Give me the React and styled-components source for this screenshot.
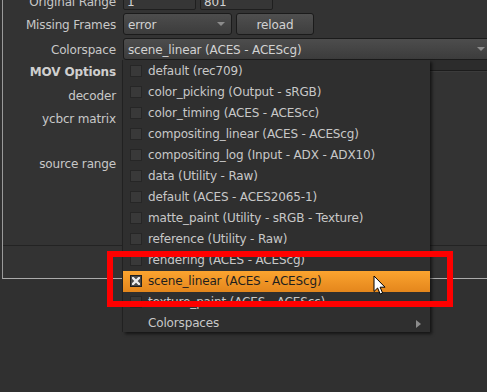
import React from "react";
import styled, { createGlobalStyle } from "styled-components";

const GlobalStyle = createGlobalStyle`
  html, body { margin: 0; padding: 0; background: #303030; overflow: hidden; }
  body {
    font-family: "DejaVu Sans", Verdana, sans-serif;
    font-size: 12px;
    letter-spacing: -0.15px;
    color: #c8c8c8;
  }
`;

const Page = styled.div`
  position: relative;
  width: 487px;
  height: 392px;
  overflow: hidden;
`;

const Panel = styled.div`
  margin: -11px 0 0 2px;
  width: 520px;
  height: 290px;
  box-sizing: border-box;
  border-left: 1px solid #9a9a9a;
  border-bottom: 1px solid #ababab;
  background: #333333;
  display: flex;
  flex-direction: column;
`;

const Row = styled.div`
  display: flex;
  align-items: flex-start;
  height: ${(p) => p.h}px;
  flex-shrink: 0;
`;

const Label = styled.div`
  width: 113px;
  flex-shrink: 0;
  text-align: right;
  white-space: nowrap;
  padding-top: ${(p) => p.pt}px;
  line-height: 18px;
  font-weight: ${(p) => (p.bold ? "bold" : "normal")};
  color: ${(p) => (p.bold ? "#cfcfcf" : "#c8c8c8")};
`;

const Controls = styled.div`
  display: flex;
  gap: 4px;
  margin-left: 7px;
  flex: 1;
`;

const Input = styled.div`
  width: 73px;
  height: 21px;
  box-sizing: border-box;
  border: 1px solid #1f1f1f;
  border-radius: 2px;
  background: #363636;
  padding: 4px 0 0 3px;
  line-height: 16px;
  color: #d2d2d2;
  overflow: hidden;
`;

const Dropdown = styled.div`
  display: flex;
  justify-content: space-between;
  align-items: flex-start;
  width: ${(p) => p.w}px;
  height: 22px;
  box-sizing: border-box;
  border: 1px solid #1b1b1b;
  border-radius: 3px;
  background: linear-gradient(#4d4d4d, #3c3c3c);
  padding: 2px 6px 0 4px;
  line-height: 18px;
  color: #d2d2d2;
  white-space: nowrap;
  flex-shrink: 0;
`;

const Arrow = styled.svg`
  margin-top: 6px;
  flex-shrink: 0;
`;

const Button = styled.div`
  width: 78px;
  height: 22px;
  box-sizing: border-box;
  border: 1px solid #1b1b1b;
  border-radius: 3px;
  background: linear-gradient(#4f4f4f, #3e3e3e);
  padding-top: 2px;
  line-height: 18px;
  text-align: center;
  color: #d2d2d2;
`;

const Band = styled.div`
  height: 10px;
  width: 100%;
  background: #2c2c2c;
  border-bottom: 1px solid #1c1c1c;
  box-shadow: 0 1px 0 #3b3b3b;
`;

const Footer = styled.div`
  margin-top: auto;
  height: 33px;
  box-sizing: border-box;
  border-top: 1px solid #232323;
`;

const Menu = styled.div`
  position: absolute;
  left: 123px;
  top: 60px;
  width: 307px;
  height: 272px;
  box-sizing: border-box;
  padding-top: 1px;
  background: #2f2f2f;
  box-shadow: 2px 2px 3px rgba(0, 0, 0, 0.6), -1px 0 0 #232323;
  overflow: hidden;
`;

const Item = styled.div`
  display: flex;
  align-items: center;
  gap: 6px;
  height: 21px;
  line-height: 21px;
  padding-left: 7px;
  white-space: nowrap;
  color: ${(p) => (p.active ? "#1e1e1e" : "#c8c8c8")};
  background: ${(p) =>
    p.active ? "linear-gradient(#fba42f, #e4861c)" : "transparent"};
`;

const Check = styled.div`
  width: 12px;
  height: 12px;
  box-sizing: border-box;
  flex-shrink: 0;
  margin-bottom: 2px;
  border: 1px solid ${(p) => (p.checked ? "#1e1e1e" : "#262626")};
  background: ${(p) => (p.checked ? "#4a4a4a" : p.hidden ? "transparent" : "#393939")};
  border-color: ${(p) => (p.hidden ? "transparent" : undefined)};
  display: flex;
  align-items: center;
  justify-content: center;
`;

const SubArrow = styled.svg`
  margin-left: auto;
  margin-right: 9px;
  flex-shrink: 0;
`;

const Highlight = styled.div`
  position: absolute;
  left: 107px;
  top: 251px;
  width: 346px;
  height: 56px;
  box-sizing: border-box;
  border: 6px solid #ff0000;
  pointer-events: none;
`;

const Cursor = styled.svg`
  position: absolute;
  left: 373px;
  top: 275px;
`;

const DownArrow = () => (
  <Arrow width="8" height="4" viewBox="0 0 8 4">
    <path d="M0 0 L8 0 L4 4 Z" fill="#8c8c8c" />
  </Arrow>
);

const items = [
  "default (rec709)",
  "color_picking (Output - sRGB)",
  "color_timing (ACES - ACEScc)",
  "compositing_linear (ACES - ACEScg)",
  "compositing_log (Input - ADX - ADX10)",
  "data (Utility - Raw)",
  "default (ACES - ACES2065-1)",
  "matte_paint (Utility - sRGB - Texture)",
  "reference (Utility - Raw)",
  "rendering (ACES - ACEScg)",
  "scene_linear (ACES - ACEScg)",
  "texture_paint (ACES - ACEScc)",
];

export default function App() {
  return (
    <Page>
      <GlobalStyle />
      <Panel>
        <Row h={24}>
          <Label pt={4}>Original Range</Label>
          <Controls>
            <Input>1</Input>
            <Input>801</Input>
          </Controls>
        </Row>
        <Row h={25}>
          <Label pt={3}>Missing Frames</Label>
          <Controls>
            <Dropdown w={109}>
              <span>error</span>
              <DownArrow />
            </Dropdown>
            <Button>reload</Button>
          </Controls>
        </Row>
        <Row h={22}>
          <Label pt={3}>Colorspace</Label>
          <Controls>
            <Dropdown w={369}>
              <span>scene_linear (ACES - ACEScg)</span>
              <DownArrow />
            </Dropdown>
          </Controls>
        </Row>
        <Row h={24}>
          <Label pt={3} bold>
            MOV Options
          </Label>
          <Controls>
            <Band />
          </Controls>
        </Row>
        <Row h={24}>
          <Label pt={3}>decoder</Label>
        </Row>
        <Row h={24}>
          <Label pt={2}>ycbcr matrix</Label>
        </Row>
        <Row h={68}>
          <Label pt={23}>source range</Label>
        </Row>
        <Footer />
      </Panel>

      <Menu>
        {items.map((t) => {
          const active = t === "scene_linear (ACES - ACEScg)";
          return (
            <Item key={t} active={active}>
              <Check checked={active}>
                {active && (
                  <svg width="8" height="8" viewBox="0 0 8 8">
                    <path
                      d="M1 1 L7 7 M7 1 L1 7"
                      stroke="#ececec"
                      strokeWidth="2.4"
                      strokeLinecap="square"
                    />
                  </svg>
                )}
              </Check>
              <span>{t}</span>
            </Item>
          );
        })}
        <Item>
          <Check hidden />
          <span>Colorspaces</span>
          <SubArrow width="5" height="8" viewBox="0 0 5 8">
            <path d="M0 0 L5 4 L0 8 Z" fill="#8c8c8c" />
          </SubArrow>
        </Item>
      </Menu>

      <Highlight />

      <Cursor width="14" height="21" viewBox="0 0 14 21">
        <path
          d="M1 1 L1 16.5 L4.6 13 L7.2 19 L9.6 18 L7.1 12.2 L12 12.2 Z"
          fill="#ffffff"
          stroke="#000000"
          strokeWidth="1"
          strokeLinejoin="miter"
        />
      </Cursor>
    </Page>
  );
}
